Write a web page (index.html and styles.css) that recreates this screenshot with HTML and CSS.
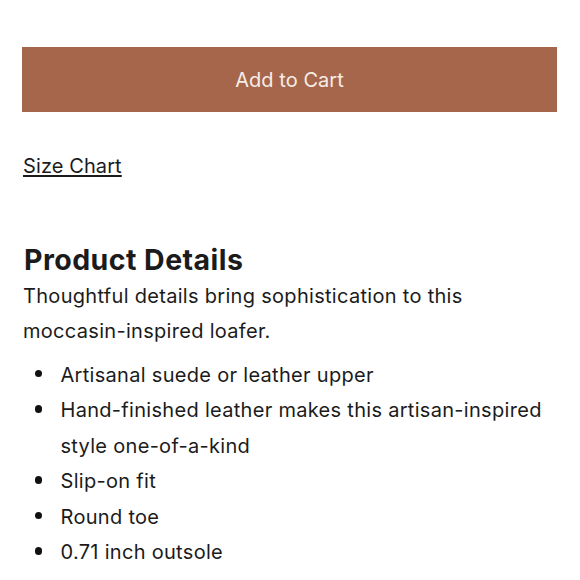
FILE: index.html
```html
<!DOCTYPE html>
<html lang="en">
<head>
<meta charset="utf-8">
<title>Product</title>
<link rel="stylesheet" href="styles.css">
</head>
<body>
<main class="product">
  <button class="add-to-cart" type="button">Add to Cart</button>
  <a class="size-chart" href="#">Size Chart</a>
  <section class="details">
    <h2 class="details-title">Product Details</h2>
    <p class="details-intro">Thoughtful details bring sophistication to this moccasin-inspired loafer.</p>
    <ul class="details-list">
      <li>Artisanal suede or leather upper</li>
      <li>Hand-finished leather makes this artisan-inspired style one-of-a-kind</li>
      <li>Slip-on fit</li>
      <li>Round toe</li>
      <li>0.71 inch outsole</li>
    </ul>
  </section>
</main>
</body>
</html>
```

FILE: styles.css
```css
* { box-sizing: border-box; }

html, body {
  margin: 0;
  background: #ffffff;
}

body {
  font-family: Inter, "Liberation Sans", sans-serif;
  color: #1b1b1b;
  font-size: 20px;
  line-height: 35.5px;
  letter-spacing: 0.3px;
}

.product {
  display: flex;
  flex-direction: column;
  align-items: flex-start;
  padding: 47px 23px 0 22px;
}

.add-to-cart {
  width: 100%;
  height: 65px;
  display: flex;
  align-items: center;
  justify-content: center;
  padding: 1px 0 0;
  border: 0;
  background: #a5664b;
  color: #f7ede6;
  font-family: inherit;
  font-size: 20px;
  line-height: normal;
  letter-spacing: 0.05px;
  cursor: pointer;
}

.size-chart {
  margin: 37px 0 0 1px;
  color: #1b1b1b;
  letter-spacing: 0.1px;
  text-decoration: underline;
  text-decoration-thickness: 1.5px;
  text-underline-offset: 2px;
}

.details {
  margin-top: 58px;
  width: 100%;
  padding-left: 1px;
}

.details-title {
  margin: 0;
  padding-left: 1px;
  font-size: 28.5px;
  line-height: 34.2px;
  font-weight: 700;
  letter-spacing: 0.45px;
}

.details-intro {
  margin: 2px 0 0;
}

.details-list {
  list-style: none;
  margin: 8px 0 0;
  padding: 0;
}

.details-list li {
  display: flex;
  align-items: flex-start;
}

.details-list li::before {
  content: "";
  flex: none;
  width: 7.5px;
  height: 7.5px;
  border-radius: 50%;
  background: #111;
  margin: 12px 18.5px 0 11.5px;
}
```
